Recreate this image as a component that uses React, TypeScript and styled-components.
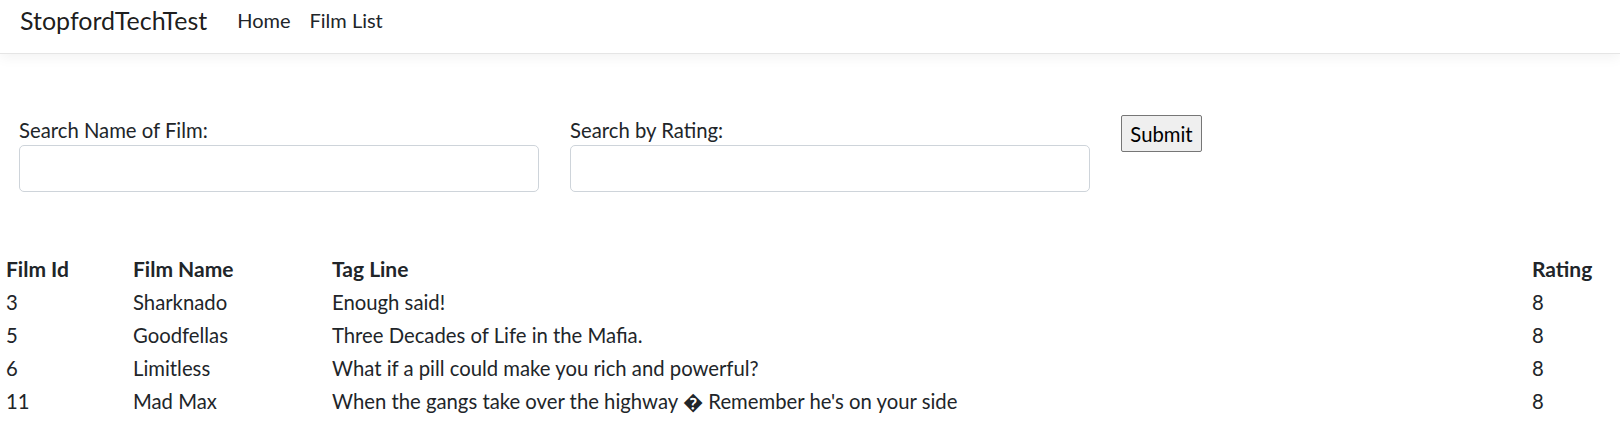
import React from "react";
import styled, { createGlobalStyle } from "styled-components";

const GlobalStyle = createGlobalStyle`
  html, body {
    margin: 0;
    padding: 0;
    background: #ffffff;
  }
  body {
    font-family: Lato, "Open Sans", "Liberation Sans", sans-serif;
    font-size: 20.3px;
    line-height: 26px;
    color: #212529;
  }
  * { box-sizing: border-box; }
`;

const NavBar = styled.header`
  height: 54px;
  display: flex;
  align-items: flex-start;
  padding: 4px 20px 0;
  border-bottom: 1px solid #e5e5e5;
  box-shadow: 0 4px 12px rgba(0, 0, 0, 0.05);
  background: #fff;
`;

const Brand = styled.a`
  font-size: 25px;
  line-height: 32px;
  color: rgba(0, 0, 0, 0.9);
  text-decoration: none;
  margin-right: 30px;
`;

const NavLinks = styled.nav`
  display: flex;
  gap: 19px;
  padding-top: 4px;
`;

const NavLink = styled.a`
  font-size: 20px;
  line-height: 24px;
  color: #212529;
  text-decoration: none;
`;

const SearchForm = styled.form`
  display: flex;
  align-items: flex-start;
  gap: 31px;
  padding: 61px 0 0 19px;
`;

const Field = styled.div`
  display: flex;
  flex-direction: column;
  width: 520px;
`;

const Label = styled.label`
  line-height: 26px;
  margin-top: 2px;
  margin-bottom: 2px;
`;

const Input = styled.input`
  height: 47px;
  width: 100%;
  border: 1px solid #ced4da;
  border-radius: 5px;
  padding: 6px 12px;
  font: inherit;
`;

const SubmitButton = styled.button`
  width: 81px;
  height: 37px;
  font-family: inherit;
  font-size: 20.3px;
  color: #000;
  background: #efefef;
  border: 1px solid #767676;
  border-radius: 2px;
  padding: 0;
`;

const Table = styled.table`
  margin-top: 60px;
  width: 100%;
  border-collapse: collapse;
  table-layout: fixed;
`;

const HeadCell = styled.th<{ $w?: number }>`
  width: ${(p) => (p.$w ? `${p.$w}px` : "auto")};
  text-align: left;
  font-size: 21px;
  font-weight: 700;
  padding: 3.5px 6px;
  line-height: 26px;
`;

const Cell = styled.td`
  padding: 3.5px 6px;
  line-height: 26px;
`;

const films = [
  { id: 3, name: "Sharknado", tag: "Enough said!", rating: 8 },
  { id: 5, name: "Goodfellas", tag: "Three Decades of Life in the Mafia.", rating: 8 },
  { id: 6, name: "Limitless", tag: "What if a pill could make you rich and powerful?", rating: 8 },
  { id: 11, name: "Mad Max", tag: "When the gangs take over the highway \uFFFD Remember he's on your side", rating: 8 },
];

export default function App() {
  return (
    <>
      <GlobalStyle />
      <NavBar>
        <Brand href="#">StopfordTechTest</Brand>
        <NavLinks>
          <NavLink href="#">Home</NavLink>
          <NavLink href="#">Film List</NavLink>
        </NavLinks>
      </NavBar>
      <SearchForm onSubmit={(e) => e.preventDefault()}>
        <Field>
          <Label>Search Name of Film:</Label>
          <Input type="text" />
        </Field>
        <Field>
          <Label>Search by Rating:</Label>
          <Input type="text" />
        </Field>
        <SubmitButton type="submit">Submit</SubmitButton>
      </SearchForm>
      <Table>
        <thead>
          <tr>
            <HeadCell $w={127}>Film Id</HeadCell>
            <HeadCell $w={199}>Film Name</HeadCell>
            <HeadCell>Tag Line</HeadCell>
            <HeadCell $w={94}>Rating</HeadCell>
          </tr>
        </thead>
        <tbody>
          {films.map((f) => (
            <tr key={f.id}>
              <Cell>{f.id}</Cell>
              <Cell>{f.name}</Cell>
              <Cell>{f.tag}</Cell>
              <Cell>{f.rating}</Cell>
            </tr>
          ))}
        </tbody>
      </Table>
    </>
  );
}
